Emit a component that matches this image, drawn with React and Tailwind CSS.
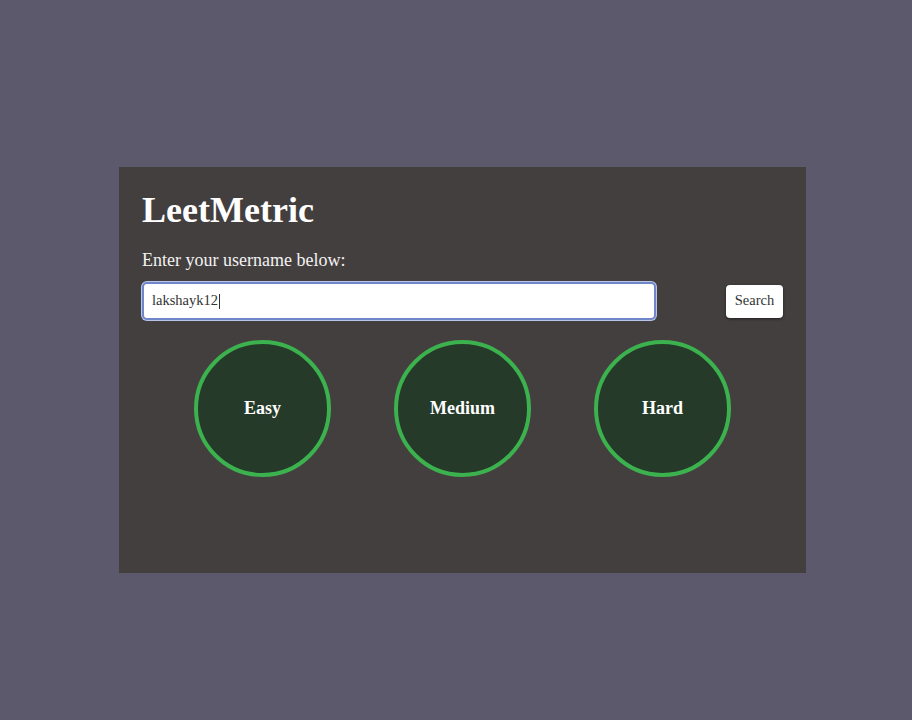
export default function App() {
  const serif = { fontFamily: '"Liberation Serif", "Times New Roman", serif' };
  return (
    <div className="min-h-[720px] w-[912px] bg-[#5c596c] pt-[167px] pl-[119px]" style={serif}>
      <div className="w-[687px] h-[406px] bg-[#443f3f] pt-[25px] px-[23px] flex flex-col">
        <h1 className="text-[36px] leading-[36px] font-bold text-white">LeetMetric</h1>
        <p className="mt-[23px] text-[18px] leading-[18px] text-[#f2f2f2]">Enter your username below:</p>
        <div className="mt-[13px] flex items-center justify-between">
          <div className="w-[514px] h-[38px] rounded-[5px] border-2 border-[#6f86c9] bg-white flex items-center pl-[8px] shadow-[0_0_0_1px_#b9c6ea]">
            <span className="text-[14.5px] text-[#333]">lakshayk12</span>
            <span className="w-px h-[15px] bg-[#333] ml-[1px]"></span>
          </div>
          <button className="w-[57px] h-[33px] rounded-[4px] bg-white text-[14.5px] text-[#333] shadow-[0_1px_3px_rgba(0,0,0,0.5)]" style={serif}>
            Search
          </button>
        </div>
        <div className="mt-[20px] flex justify-center gap-[63px]">
          {['Easy', 'Medium', 'Hard'].map((l) => (
            <div key={l} className="w-[137px] h-[137px] rounded-full border-[4px] border-[#3cb24e] bg-[#253a29] flex items-center justify-center">
              <span className="text-[18px] font-bold text-white">{l}</span>
            </div>
          ))}
        </div>
      </div>
    </div>
  );
}
